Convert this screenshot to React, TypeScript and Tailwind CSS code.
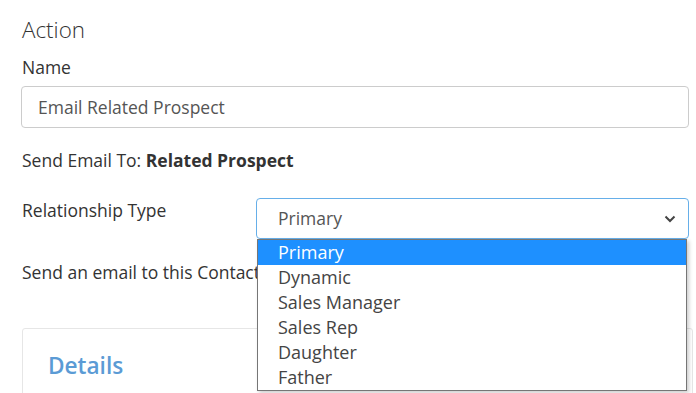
import React from "react";

export default function App() {
  const options = ["Primary", "Dynamic", "Sales Manager", "Sales Rep", "Daughter", "Father"];
  return (
    <div
      className="w-[696px] h-[393px] overflow-hidden bg-white text-[#333] pl-[21px] pr-[7px]"
      style={{ fontFamily: '"Open Sans", sans-serif' }}
    >
      <div className="pt-[15px] text-[22.4px] font-light leading-[30px] pl-px">Action</div>
      <div className="mt-[10px] text-[17.5px] leading-[25px] pl-px">Name</div>
      <div className="mt-[6px] h-[42px] border border-[#cccccc] rounded-[4px] flex items-center pl-[16px] text-[17.5px] text-[#555]">
        Email Related Prospect
      </div>
      <div className="mt-[20px] text-[17.5px] leading-[25px] pl-px">
        Send Email To: <span className="font-bold">Related Prospect</span>
      </div>
      <div className="mt-[25px] flex relative">
        <div className="w-[235px] pl-px text-[17.5px] leading-[25px]">Relationship Type</div>
        <div className="relative flex-1">
          <div className="h-[41px] border border-[#66afe9] rounded-[4px] flex items-center pl-[21px] pr-[10px] text-[17.5px] text-[#555] justify-between">
            <span>Primary</span>
            <svg width="12" height="8" viewBox="0 0 12 8" className="mr-[2px]">
              <path d="M1.5 1.5 L6 6 L10.5 1.5" fill="none" stroke="#444" strokeWidth="2" />
            </svg>
          </div>
          <div className="absolute left-px top-[41px] w-[430px] bg-white border border-[#767676] shadow-[2px_2px_4px_rgba(0,0,0,0.2)] z-10">
            {options.map((o, i) => (
              <div
                key={o}
                className={
                  "h-[25px] leading-[25px] pl-[20px] text-[18px] " +
                  (i === 0 ? "bg-[#1e90ff] text-white" : "text-[#444]")
                }
              >
                {o}
              </div>
            ))}
          </div>
        </div>
      </div>
      <div className="mt-[21px] text-[17.5px] leading-[25px] pl-px">Send an email to this Contact</div>
      <div className="mt-[43px] ml-px mr-[-4px] border border-[#e6e6e6] rounded-t-[3px] h-[100px] pt-[22px] pl-[25px]">
        <div className="text-[22.6px] font-semibold text-[#5b9bd5] leading-[30px]">Details</div>
      </div>
    </div>
  );
}
